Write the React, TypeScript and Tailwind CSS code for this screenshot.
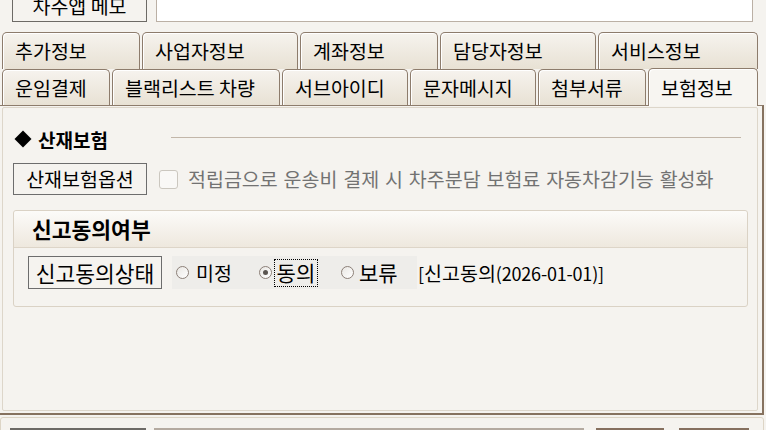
import React from "react";

const row1 = [
  { label: "추가정보", w: "w-[138px]" },
  { label: "사업자정보", w: "w-[156px]" },
  { label: "계좌정보", w: "w-[138px]" },
  { label: "담당자정보", w: "w-[156px]" },
  { label: "서비스정보", w: "w-[160px]" },
];

const row2 = [
  { label: "운임결제", w: "w-[108px]" },
  { label: "블랙리스트 차량", w: "w-[168px]" },
  { label: "서브아이디", w: "w-[126px]" },
  { label: "문자메시지", w: "w-[126px]" },
  { label: "첨부서류", w: "w-[108px]" },
];

function Tab({ label, w, h }: { label: string; w: string; h: string }) {
  return (
    <div
      className={`${w} ${h} shrink-0 rounded-t-[5px] border border-b-0 border-[#8d7c6c] bg-gradient-to-b from-[#f6f3ee] to-[#e8e1d4] shadow-[inset_1px_1px_0_#ffffff] flex items-center pl-[12px] text-[19.5px] leading-none text-black`}
    >
      {label}
    </div>
  );
}

function Radio({ checked }: { checked?: boolean }) {
  return (
    <div className="w-[13px] h-[13px] shrink-0 rounded-full border border-[#8c8078] bg-gradient-to-br from-[#e9e7e3] to-[#ffffff] flex items-center justify-center">
      {checked && <div className="w-[5px] h-[5px] rounded-full bg-[#5a5550]" />}
    </div>
  );
}

export default function App() {
  return (
    <div className="w-[766px] h-[430px] overflow-hidden bg-[#f5f3ef] font-['Noto_Sans_CJK_KR','Noto_Sans',sans-serif] text-black">
      {/* top row */}
      <div className="h-[22px] flex items-end">
        <div className="ml-[12px] w-[135px] h-[32px] shrink-0 border border-[#6d6a66] bg-[#f5f3ef] flex items-center justify-center text-[19.5px] leading-none">
          차주앱 메모
        </div>
        <div className="ml-[9px] w-[597px] h-[32px] shrink-0 border border-[#bbb0a5] bg-white" />
      </div>

      {/* tabs row 1 */}
      <div className="mt-[10px] h-[37px] flex gap-[2px] pl-[2px]">
        {row1.map((t) => (
          <Tab key={t.label} label={t.label} w={t.w} h="h-[37px]" />
        ))}
      </div>

      {/* tabs row 2 */}
      <div className="h-[36px] flex items-end gap-[2px] pl-[2px]">
        {row2.map((t) => (
          <Tab key={t.label} label={t.label} w={t.w} h="h-[36px]" />
        ))}
        <div className="relative z-10 -mb-[1px] w-[110px] h-[38px] shrink-0 rounded-t-[5px] border border-b-0 border-[#8d7c6c] bg-[#f7f5f1] shadow-[inset_1px_1px_0_#ffffff] flex items-center pl-[12px] text-[19.5px] leading-none">
          보험정보
        </div>
      </div>

      {/* panel */}
      <div className="w-[764px] h-[310px] border-t border-t-[#8d7c6c] border-r-2 border-r-[#86725f] border-b-2 border-b-[#86725f]">
        <div className="mt-[1px] ml-[2px] w-[756px] h-[304px] rounded-[2px] border border-[#ddd6ca] bg-[#f5f3ef]">
          {/* section header */}
          <div className="mt-[19px] h-[24px] flex items-center pl-[11px] pr-[16px]">
            <div className="w-[17px] h-[17px] flex items-center justify-center">
              <div className="w-[12px] h-[12px] rotate-45 bg-black" />
            </div>
            <span className="ml-[7px] text-[19px] font-bold leading-none">산재보험</span>
            <div className="ml-[63px] mb-[4px] flex-1 h-px bg-[#c2b6a9]" />
          </div>

          {/* option row */}
          <div className="mt-[12px] flex items-center pl-[10px]">
            <div className="w-[134px] h-[32px] border border-[#6d6d6d] flex items-center justify-center text-[19.5px] leading-none">
              산재보험옵션
            </div>
            <div className="ml-[12px] w-[19px] h-[19px] rounded-[3px] border border-[#cbc7bf] bg-[#f9f8f6]" />
            <span className="ml-[10px] text-[19.5px] leading-none text-[#727272] [word-spacing:1.5px]">
              적립금으로 운송비 결제 시 차주분담 보험료 자동차감기능 활성화
            </span>
          </div>

          {/* group box */}
          <div className="mt-[15px] ml-[10px] w-[735px] h-[97px] rounded-[3px] border border-[#dad2c5]">
            <div className="h-[37px] border-b border-[#ddd5c8] bg-gradient-to-b from-[#fcfbf9] to-[#eee8de] rounded-t-[3px] flex items-center pl-[18px]">
              <span className="text-[21.5px] font-bold leading-none">신고동의여부</span>
            </div>
            <div className="mt-[8px] flex items-center pl-[14px]">
              <div className="w-[134px] h-[33px] border border-[#6d6d6d] flex items-center justify-center text-[21.5px] leading-none">
                신고동의상태
              </div>
              <div className="ml-[10px] w-[245px] h-[33px] bg-[#eeedea] flex items-center">
                <div className="ml-[4px] flex items-center">
                  <Radio />
                  <span className="ml-[7px] text-[19.5px] leading-none">미정</span>
                </div>
                <div className="ml-[27px] flex items-center">
                  <Radio checked />
                  <div className="ml-[2px] h-[28px] w-[44px] border border-dotted border-black flex items-center justify-center text-[21px] leading-none">
                    동의
                  </div>
                </div>
                <div className="ml-[23px] flex items-center">
                  <Radio />
                  <span className="ml-[5px] text-[21px] leading-none">보류</span>
                </div>
              </div>
              <span className="ml-[1px] leading-none">
                <span className="text-[18px]">[</span>
                <span className="text-[19.5px]">신고동의</span>
                <span className="text-[18px] tracking-[-0.2px]">(2026-01-01)]</span>
              </span>
            </div>
          </div>
        </div>
      </div>

      {/* bottom strip */}
      <div className="mt-[2px] w-[764px] h-[40px] rounded-t-[3px] border border-[#ddd5c6] bg-[#f5f3ef] flex items-start pt-[10px]">
        <div className="ml-[9px] w-[136px] h-[30px] border-t-2 border-[#6d6a66]" />
        <div className="ml-[8px] w-[430px] h-[30px] border-t-2 border-[#b4aaa0]" />
        <div className="ml-[12px] w-[68px] h-[30px] border-t-2 border-[#86705f]" />
        <div className="ml-[15px] w-[70px] h-[30px] border-t-2 border-[#86705f]" />
      </div>
    </div>
  );
}
